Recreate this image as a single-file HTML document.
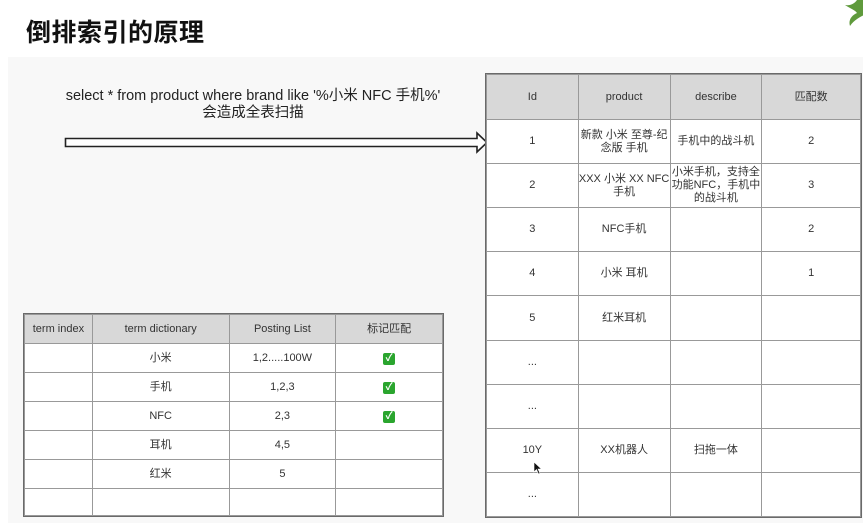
<!DOCTYPE html>
<html><head><meta charset="utf-8"><style>
*{margin:0;padding:0;box-sizing:border-box}
body{width:863px;height:530px;background:#fff;position:relative;overflow:hidden;font-family:"Liberation Sans","Noto Sans CJK SC",sans-serif;color:#333}
.title{position:absolute;left:26px;top:13px;font-size:25px;font-weight:bold;color:#111;letter-spacing:0.5px;font-family:"Liberation Sans","Noto Sans CJK SC",sans-serif}
.panel{position:absolute;left:8px;top:57px;width:855px;height:466px;background:#f8f8f8}
.sql{position:absolute;left:20px;width:466px;text-align:center;font-size:14.5px;color:#222;line-height:18px}
table{position:absolute;border-collapse:collapse;background:#fff;font-size:11px;color:#333}
td,th{border:1px solid #999;text-align:center;vertical-align:middle;font-weight:normal;line-height:13px;padding:0}
th{background:#d8d8d8}
table.outer{outline:1.5px solid #6a6a6a}
.chk{display:inline-block;width:12px;height:12px;background:#2aa52e;border-radius:2px;color:#fff;font-size:10px;line-height:12px;font-weight:bold}
.leaf{position:absolute;left:836px;top:-2px}
</style></head><body>
<div class="title">倒排索引的原理</div>
<svg class="leaf" width="30" height="30" viewBox="0 0 30 30"><path d="M22 0 C20 5 15 8 9 7 C15 11 19 12 21 15 C16 17 12 22 14 28 C18 22 24 19 30 16 L30 0Z" fill="#5f9a3c"/></svg>
<div class="panel"></div>
<div class="sql" style="top:87px">select * from product where brand like '%小米 NFC 手机%'</div>
<div class="sql" style="top:104px">会造成全表扫描</div>
<svg style="position:absolute;left:60px;top:128px" width="432" height="30"><path d="M5.5 10.5 H417 V5 L427 14.5 L417 24 V18.5 H5.5 Z" fill="#fff" stroke="#222" stroke-width="1.6"/></svg>

<table class="outer" style="left:486px;top:74px;width:375px;height:442px">
<colgroup><col style="width:92px"><col style="width:92px"><col style="width:92px"><col style="width:99px"></colgroup>
<tr style="height:45px"><th>Id</th><th>product</th><th>describe</th><th>匹配数</th></tr>
<tr style="height:44px"><td>1</td><td>新款 小米 至尊-纪念版 手机</td><td>手机中的战斗机</td><td>2</td></tr>
<tr style="height:44px"><td>2</td><td>XXX 小米 XX NFC 手机</td><td>小米手机，支持全功能NFC，手机中的战斗机</td><td>3</td></tr>
<tr style="height:44px"><td>3</td><td>NFC手机</td><td></td><td>2</td></tr>
<tr style="height:44px"><td>4</td><td>小米 耳机</td><td></td><td>1</td></tr>
<tr style="height:45px"><td>5</td><td>红米耳机</td><td></td><td></td></tr>
<tr style="height:44px"><td>...</td><td></td><td></td><td></td></tr>
<tr style="height:44px"><td>...</td><td></td><td></td><td></td></tr>
<tr style="height:44px"><td>10Y</td><td>XX机器人</td><td>扫拖一体</td><td></td></tr>
<tr style="height:44px"><td>...</td><td></td><td></td><td></td></tr>
</table>

<table class="outer" style="left:24px;top:314px;width:419px;height:201px">
<colgroup><col style="width:68px"><col style="width:137px"><col style="width:107px"><col style="width:107px"></colgroup>
<tr style="height:29px"><th>term index</th><th>term dictionary</th><th>Posting List</th><th>标记匹配</th></tr>
<tr style="height:29px"><td></td><td>小米</td><td>1,2.....100W</td><td><span class="chk">✓</span></td></tr>
<tr style="height:29px"><td></td><td>手机</td><td>1,2,3</td><td><span class="chk">✓</span></td></tr>
<tr style="height:29px"><td></td><td>NFC</td><td>2,3</td><td><span class="chk">✓</span></td></tr>
<tr style="height:29px"><td></td><td>耳机</td><td>4,5</td><td></td></tr>
<tr style="height:29px"><td></td><td>红米</td><td>5</td><td></td></tr>
<tr style="height:27px"><td></td><td></td><td></td><td></td></tr>
</table>
<svg style="position:absolute;left:533px;top:461px" width="10" height="14"><path d="M1 1 L1 11 L3.5 8.5 L5.5 13 L7 12.3 L5 8 L8.5 8 Z" fill="#111" stroke="#fff" stroke-width="0.6"/></svg>
</body></html>
